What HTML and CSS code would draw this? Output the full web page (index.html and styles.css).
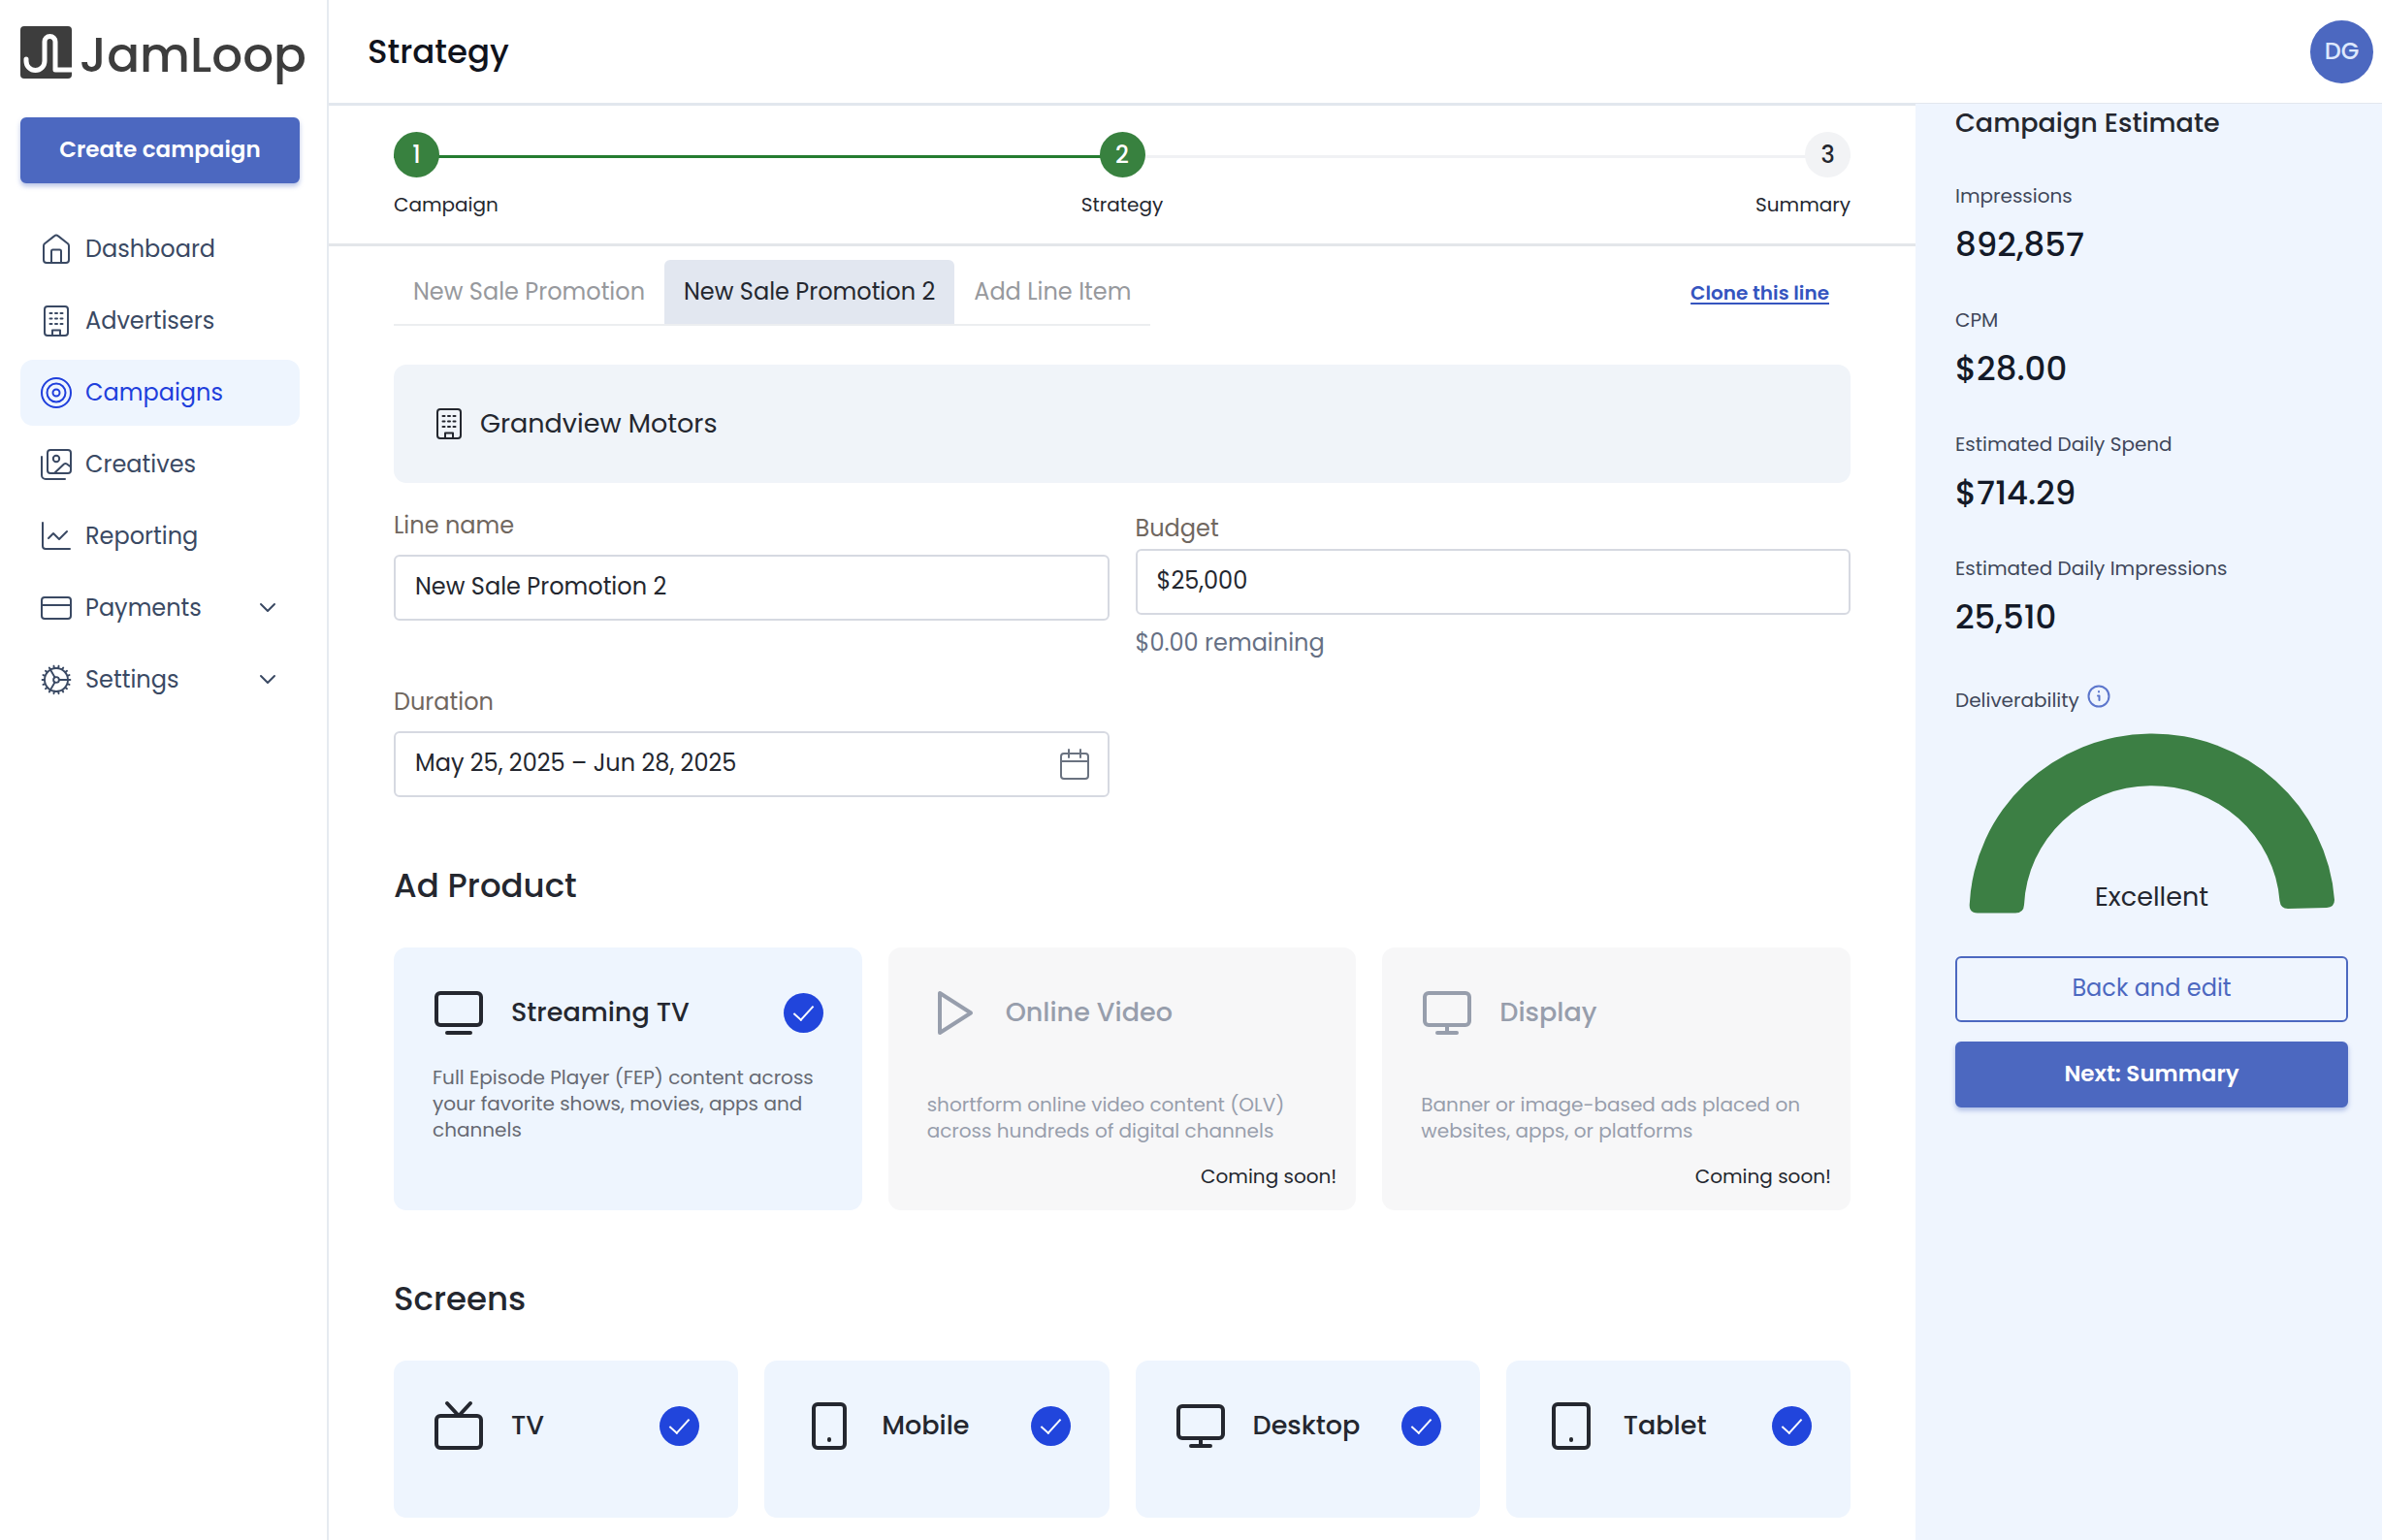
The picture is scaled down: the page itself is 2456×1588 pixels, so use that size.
FILE: index.html
```html
<!DOCTYPE html>
<html lang="en">
<head>
    <meta charset="UTF-8">
    <meta name="viewport" content="width=device-width, initial-scale=1.0">
    <title>JamLoop - Strategy</title>
    <link rel="stylesheet" href="styles.css">
</head>
<body>
    <!-- shared icons -->
    <svg class="sprite" aria-hidden="true">
        <symbol id="building" viewBox="0 0 32 32">
            <rect x="4" y="1" width="24" height="30" rx="3"/>
            <path d="M12 31v-5.500h8V31"/>
            <path d="M9.500 8h2M15 8h2M20.500 8h2M9.500 13.500h2M15 13.500h2M20.500 13.500h2M9.500 19h2M15 19h2M20.500 19h2"/>
        </symbol>
        <symbol id="chevron" viewBox="0 0 18 18">
            <path d="M2 5l7 7 7-7"/>
        </symbol>
        <symbol id="monitor" viewBox="0 0 54 54">
            <rect x="4" y="7" width="46" height="33" rx="4"/>
            <path d="M27 40v8M17 48h20"/>
        </symbol>
    </svg>

    <div class="app">
        <aside class="sidebar">
            <a class="logo" href="#" aria-label="JamLoop">
                <svg class="logo-mark" viewBox="0 0 54 56">
                    <rect x="0" y="0" width="53" height="54" rx="4" fill="#3d3d3d"/>
                    <path d="M6 34v2a9 9 0 0 0 19 0V16a5.500 5.500 0 0 1 11 0v29h18" fill="none" stroke="#fff" stroke-width="5" stroke-linecap="round"/>
                </svg>
                <span class="logo-text">JamLoop</span>
            </a>
            <button class="btn btn-primary" type="button">Create campaign</button>
            <nav class="nav">
                <a class="nav-item" href="#">
                    <svg class="icon" viewBox="0 0 32 32"><path d="M3 12.500a3 3 0 0 1 1-2.200L14 2.400a3 3 0 0 1 4 0l10 7.900a3 3 0 0 1 1 2.200V27a3 3 0 0 1-3 3H6a3 3 0 0 1-3-3z"/><path d="M11 30V18a1.500 1.500 0 0 1 1.500-1.500h7A1.500 1.500 0 0 1 21 18v12"/></svg>
                    <span>Dashboard</span>
                </a>
                <a class="nav-item" href="#">
                    <svg class="icon"><use href="#building"/></svg>
                    <span>Advertisers</span>
                </a>
                <a class="nav-item active" href="#">
                    <svg class="icon" viewBox="0 0 32 32"><circle cx="16" cy="16" r="15"/><circle cx="16" cy="16" r="9.500"/><circle cx="16" cy="16" r="3.500"/></svg>
                    <span>Campaigns</span>
                </a>
                <a class="nav-item" href="#">
                    <svg class="icon" viewBox="0 0 32 32"><rect x="7" y="1" width="24" height="24" rx="3"/><path d="M1 8v19a4 4 0 0 0 4 4h20"/><circle cx="16" cy="10" r="3.200"/><path d="M14 25l10-9.500a2.500 2.500 0 0 1 3 0l4 3"/></svg>
                    <span>Creatives</span>
                </a>
                <a class="nav-item" href="#">
                    <svg class="icon" viewBox="0 0 32 32"><path d="M2 2v24a3 3 0 0 0 3 3h25"/><path d="M8 18l5-5 6 6 8-8"/></svg>
                    <span>Reporting</span>
                </a>
                <a class="nav-item" href="#">
                    <svg class="icon" viewBox="0 0 32 32"><rect x="1" y="5" width="30" height="22" rx="3"/><path d="M1 13h30"/></svg>
                    <span>Payments</span>
                    <svg class="chevron"><use href="#chevron"/></svg>
                </a>
                <a class="nav-item" href="#">
                    <svg class="icon gear" viewBox="2 2 20 20"><path d="M4.500 12a7.500 7.500 0 0 0 15 0m-15 0a7.500 7.500 0 1 1 15 0m-15 0H3m16.500 0H21m-1.500 0H13.800m-10.257 3.077 1.410-.513m14.095-5.130 1.410-.513M5.106 17.785l1.150-.964m11.490-9.642 1.149-.964M7.501 19.795l.750-1.300m7.500-12.990.750-1.300m-6.063 16.658.260-1.477m2.605-14.772.260-1.477m0 17.726-.260-1.477M10.698 4.614l-.260-1.477M16.500 19.794l-.750-1.299M7.500 4.205 11.100 10.440m7.794 7.345-1.149-.964M6.256 7.178l-1.150-.964m15.352 8.864-1.410-.513M4.954 9.435l-1.410-.514M11.100 13.560l-2.850 4.935"/><circle cx="12" cy="12" r="1.800"/></svg>
                    <span>Settings</span>
                    <svg class="chevron"><use href="#chevron"/></svg>
                </a>
            </nav>
        </aside>

        <div class="page">
            <header class="topbar">
                <h1>Strategy</h1>
                <button class="avatar" type="button">DG</button>
            </header>

            <div class="columns">
                <main class="main">
                    <ol class="stepper">
                        <li class="step done">
                            <span class="step-number">1</span>
                            <span class="step-label">Campaign</span>
                        </li>
                        <li class="step done">
                            <span class="step-number">2</span>
                            <span class="step-label">Strategy</span>
                        </li>
                        <li class="step">
                            <span class="step-number">3</span>
                            <span class="step-label">Summary</span>
                        </li>
                    </ol>

                    <div class="content">
                        <div class="tab-row">
                            <div class="tabs">
                                <button class="tab" type="button">New Sale Promotion</button>
                                <button class="tab selected" type="button">New Sale Promotion 2</button>
                                <button class="tab" type="button">Add Line Item</button>
                            </div>
                            <a class="clone" href="#">Clone this line</a>
                        </div>

                        <div class="advertiser">
                            <svg class="icon"><use href="#building"/></svg>
                            <span>Grandview Motors</span>
                        </div>

                        <form class="form">
                            <div class="field">
                                <label for="line-name">Line name</label>
                                <input type="text" id="line-name" value="New Sale Promotion 2">
                            </div>
                            <div class="field field-budget">
                                <label for="budget">Budget</label>
                                <input type="text" id="budget" value="$25,000">
                                <p class="hint">$0.00 remaining</p>
                            </div>
                            <div class="field">
                                <label for="duration">Duration</label>
                                <div class="date-box">
                                    <input type="text" id="duration" value="May 25, 2025 – Jun 28, 2025">
                                    <svg class="calendar" viewBox="0 0 32 32"><rect x="2" y="5" width="28" height="26" rx="3"/><path d="M2 13h28M10 1v8M22 1v8"/></svg>
                                </div>
                            </div>
                        </form>

                        <h2>Ad Product</h2>
                        <div class="cards products">
                            <label class="card">
                                <span class="card-head">
                                    <svg class="card-icon" viewBox="0 0 54 54"><rect x="4" y="7" width="46" height="33" rx="4"/><path d="M15 48h24"/></svg>
                                    <span class="card-title">Streaming TV</span>
                                    <input type="checkbox" checked>
                                </span>
                                <span class="card-text">Full Episode Player (FEP) content across your favorite shows, movies, apps and channels</span>
                            </label>
                            <div class="card muted">
                                <div class="card-head">
                                    <svg class="card-icon" viewBox="0 0 54 54"><path d="M13 7v41l32-20.500z"/></svg>
                                    <span class="card-title">Online Video</span>
                                </div>
                                <p class="card-text">shortform online video content (OLV) across hundreds of digital channels</p>
                                <p class="soon">Coming soon!</p>
                            </div>
                            <div class="card muted">
                                <div class="card-head">
                                    <svg class="card-icon"><use href="#monitor"/></svg>
                                    <span class="card-title">Display</span>
                                </div>
                                <p class="card-text">Banner or image-based ads placed on websites, apps, or platforms</p>
                                <p class="soon">Coming soon!</p>
                            </div>
                        </div>

                        <h2>Screens</h2>
                        <div class="cards screens">
                            <label class="card">
                                <span class="card-head">
                                    <svg class="card-icon" viewBox="0 0 54 54"><rect x="4" y="17" width="46" height="33" rx="4"/><path d="M15 4l12 13L39 4"/></svg>
                                    <span class="card-title">TV</span>
                                    <input type="checkbox" checked>
                                </span>
                            </label>
                            <label class="card">
                                <span class="card-head">
                                    <svg class="card-icon" viewBox="0 0 54 54"><rect x="11" y="5" width="32" height="45" rx="4"/><path d="M27 41v1"/></svg>
                                    <span class="card-title">Mobile</span>
                                    <input type="checkbox" checked>
                                </span>
                            </label>
                            <label class="card">
                                <span class="card-head">
                                    <svg class="card-icon"><use href="#monitor"/></svg>
                                    <span class="card-title">Desktop</span>
                                    <input type="checkbox" checked>
                                </span>
                            </label>
                            <label class="card">
                                <span class="card-head">
                                    <svg class="card-icon" viewBox="0 0 54 54"><rect x="9" y="5" width="36" height="45" rx="4"/><path d="M27 41v1"/></svg>
                                    <span class="card-title">Tablet</span>
                                    <input type="checkbox" checked>
                                </span>
                            </label>
                        </div>
                    </div>
                </main>

                <aside class="estimate">
                    <h3>Campaign Estimate</h3>
                    <dl class="stats">
                        <div class="stat">
                            <dt>Impressions</dt>
                            <dd>892,857</dd>
                        </div>
                        <div class="stat">
                            <dt>CPM</dt>
                            <dd>$28.00</dd>
                        </div>
                        <div class="stat">
                            <dt>Estimated Daily Spend</dt>
                            <dd>$714.29</dd>
                        </div>
                        <div class="stat">
                            <dt>Estimated Daily Impressions</dt>
                            <dd>25,510</dd>
                        </div>
                    </dl>
                    <div class="deliverability">
                        <span>Deliverability</span>
                        <svg class="info" viewBox="0 0 24 24"><circle cx="12" cy="12" r="10.500"/><path d="M12 7v.500M11 11.500h1.500V16"/></svg>
                    </div>
                    <div class="gauge">
                        <svg viewBox="0 0 378 186">
                            <path d="M9 185.500Q.5 185.500 .7 177A188.500 185 0 0 1 377 172Q377 179.500 369 180L329 181Q321.500 181 320.500 173A132 128.500 0 0 0 57 177Q56.500 185.500 48 185.500Z" fill="#3c7f44"/>
                        </svg>
                        <span class="gauge-label">Excellent</span>
                    </div>
                    <div class="actions">
                        <button class="btn btn-outline" type="button">Back and edit</button>
                        <button class="btn btn-primary" type="button">Next: Summary</button>
                    </div>
                </aside>
            </div>
        </div>
    </div>
</body>
</html>
```
FILE: styles.css
```css
* {
    box-sizing: border-box;
}

body {
    margin: 0;
    font-family: Poppins, Inter, "Open Sans", sans-serif;
    font-size: 24px;
    line-height: 38px;
    color: #24272f;
    background-color: #fff;
}

h1, h2, h3, p, ol, dl, dd {
    margin: 0;
    padding: 0;
}

h1, h2, h3 {
    font-weight: 500;
}

button, input {
    font: inherit;
    color: inherit;
}

a {
    color: inherit;
    text-decoration: none;
}

svg {
    display: block;
    flex-shrink: 0;
    fill: none;
    stroke: currentColor;
    stroke-linecap: round;
    stroke-linejoin: round;
}

.sprite {
    position: absolute;
    width: 0;
    height: 0;
}

.app {
    display: flex;
    min-height: 100vh;
}

/* sidebar */
.sidebar {
    flex: 0 0 339px;
    min-width: 0;
    padding: 27px 28px 0 21px;
    border-right: 2px solid #e6eaf0;
}

.logo {
    display: flex;
    align-items: flex-start;
    gap: 7px;
    height: 60px;
    color: #3d3d3d;
}

.logo-mark {
    width: 54px;
    height: 56px;
    stroke: none;
}

.logo-text {
    font-size: 50px;
    font-weight: 500;
    line-height: 60px;
}

.btn {
    display: block;
    width: 100%;
    height: 68px;
    padding: 0 20px 2px;
    border: 2px solid #4c68c0;
    border-radius: 6px;
    cursor: pointer;
}

.btn-primary {
    color: #fff;
    font-size: 23px;
    font-weight: 600;
    background-color: #4c68c0;
    box-shadow: 0 3px 5px #4c68c066;
}

.btn-outline {
    color: #4c68c0;
    background-color: transparent;
}

.sidebar .btn {
    margin-top: 34px;
}

.nav {
    display: flex;
    flex-direction: column;
    gap: 6px;
    margin-top: 34px;
}

.nav-item {
    display: flex;
    align-items: center;
    gap: 14px;
    height: 68px;
    padding: 0 24px 0 21px;
    border-radius: 13px;
    color: #3a4963;
}

.nav-item.active {
    color: #1f3fdc;
    background-color: #eef5fe;
}

.icon {
    width: 32px;
    height: 32px;
    stroke-width: 2;
}

.gear {
    stroke-width: 1.2;
}

.chevron {
    width: 18px;
    height: 18px;
    margin-left: auto;
    stroke-width: 2;
}

/* top bar */
.page {
    flex: 1;
    display: flex;
    flex-direction: column;
    min-width: 0;
}

.topbar {
    display: flex;
    align-items: center;
    justify-content: space-between;
    height: 107px;
    padding: 0 9px 0 40px;
    border-bottom: 1px solid #e2e7ee;
}

h1 {
    font-size: 34px;
    line-height: 50px;
    color: #10131c;
}

.avatar {
    width: 65px;
    height: 65px;
    padding: 0;
    border: none;
    border-radius: 50%;
    font-weight: 500;
    color: #dde8fd;
    background-color: #4c68c0;
}

.columns {
    flex: 1;
    display: flex;
}

.main {
    flex: 1;
    min-width: 0;
}

/* stepper */
.stepper {
    display: flex;
    justify-content: space-between;
    padding: 27px 67px 24px;
    border-top: 2px solid #e2e7ee;
    border-bottom: 3px solid #e3e6ea;
    list-style: none;
}

.step {
    flex: 1;
    display: flex;
    flex-direction: column;
    align-items: center;
    gap: 12px;
    font-size: 20px;
    line-height: 32px;
}

.step:first-child {
    align-items: flex-start;
}

.step:last-child {
    align-items: flex-end;
}

.step-number {
    display: flex;
    align-items: center;
    justify-content: center;
    width: 47px;
    height: 47px;
    border-radius: 50%;
    font-size: 24px;
    font-weight: 500;
    background-color: #f2f3f5;
}

.step.done .step-number {
    color: #fff;
    background-color: #38813f;
}

/* connecting line, each step draws its own part */
.step {
    background: linear-gradient(#f0f1f4, #f0f1f4) 0 24px / 100% 3px no-repeat;
}

.step:first-child {
    background-image: linear-gradient(#257c30, #257c30);
}

.step:nth-child(2) {
    background-image: linear-gradient(90deg, #257c30 50%, #f0f1f4 50%);
}

/* tabs */
.content {
    padding: 14px 67px 22px;
}

.tab-row {
    display: flex;
    align-items: center;
    justify-content: space-between;
    padding-right: 22px;
}

.tabs {
    display: flex;
    border-bottom: 2px solid #eceef0;
}

.tab {
    height: 66px;
    padding: 0 20px;
    border: none;
    border-radius: 6px 6px 0 0;
    color: #97999d;
    background-color: transparent;
    cursor: pointer;
}

.tab.selected {
    color: #24272f;
    background-color: #e2e7f0;
}

.clone {
    font-size: 20px;
    font-weight: 600;
    line-height: 32px;
    color: #3555bf;
    text-decoration: underline;
    text-underline-offset: 3px;
}

.advertiser {
    display: flex;
    align-items: center;
    gap: 16px;
    height: 122px;
    margin-top: 40px;
    padding: 0 41px;
    border-radius: 13px;
    font-size: 27px;
    background-color: #f0f4f9;
}

/* form */
.form {
    display: grid;
    grid-template-columns: 1fr 1fr;
    gap: 23px 27px;
    margin-top: 25px;
}

.field {
    display: flex;
    flex-direction: column;
    gap: 11px;
}

.field-budget {
    gap: 2px;
    padding-top: 3px;
}

.field label {
    color: #70675f;
}

.field input {
    width: 100%;
    height: 68px;
    padding: 0 20px 3px;
    border: 2px solid #d6d9e1;
    border-radius: 6px;
    background-color: #fff;
}

.hint {
    margin-top: 8px;
    color: #667084;
}

.date-box {
    position: relative;
}

.calendar {
    position: absolute;
    top: 18px;
    right: 20px;
    width: 32px;
    height: 32px;
    color: #6a7280;
    stroke-width: 2;
}

/* cards */
h2 {
    margin-top: 66px;
    font-size: 34px;
    line-height: 50px;
}

.cards {
    display: grid;
    gap: 27px;
    margin-top: 39px;
}

.products {
    grid-template-columns: repeat(3, 1fr);
}

.screens {
    grid-template-columns: repeat(4, 1fr);
}

.card {
    display: flex;
    flex-direction: column;
    gap: 27px;
    padding: 40px 40px 21px;
    border-radius: 13px;
    background-color: #eef5fe;
}

.screens .card {
    min-height: 162px;
}

.card-head {
    display: flex;
    align-items: center;
    gap: 27px;
}

.card-icon {
    width: 54px;
    height: 54px;
    stroke-width: 4;
}

.card-title {
    font-size: 27px;
    font-weight: 500;
}

.card input {
    display: flex;
    align-items: center;
    justify-content: center;
    width: 41px;
    height: 41px;
    margin: 0 0 0 auto;
    border-radius: 50%;
    background-color: #2145dc;
    appearance: none;
}

/* tick */
.card input::after {
    content: "";
    width: 9px;
    height: 18px;
    margin-bottom: 5px;
    border: solid #fff;
    border-width: 0 2px 2px 0;
    transform: rotate(42deg);
}

.card-text {
    font-size: 20px;
    line-height: 27px;
    color: #666972;
}

.muted {
    gap: 20px;
    background-color: #f7f7f8;
}

.muted .card-head,
.muted .card-text {
    color: #979eac;
}

.muted .card-text {
    margin-top: 35px;
}

.soon {
    margin-right: -20px;
    font-size: 20px;
    line-height: 27px;
    text-align: right;
}

/* estimate panel */
.estimate {
    flex: 0 0 481px;
    padding: 2px 35px 40px 41px;
    background-color: #eff5fe;
}

h3 {
    font-size: 27px;
    line-height: 36px;
}

.stats {
    display: flex;
    flex-direction: column;
    gap: 36px;
    margin-top: 41px;
}

.stat {
    display: flex;
    flex-direction: column;
    gap: 8px;
}

.stat dt,
.deliverability {
    font-size: 20px;
    line-height: 32px;
    color: #40475a;
}

.stat dd {
    font-size: 34px;
    font-weight: 500;
    line-height: 52px;
    color: #141a28;
}

.deliverability {
    display: flex;
    gap: 8px;
    margin-top: 44px;
}

.info {
    width: 24px;
    height: 24px;
    color: #5c76cc;
    stroke-width: 2;
}

.gauge {
    position: relative;
    width: 378px;
    margin: 18px auto 0;
}

.gauge svg {
    width: 100%;
    stroke: none;
}

.gauge-label {
    position: absolute;
    right: 0;
    bottom: 0;
    left: 0;
    font-size: 27px;
    line-height: 34px;
    text-align: center;
}

.actions {
    display: flex;
    flex-direction: column;
    gap: 20px;
    margin-top: 44px;
}
```
